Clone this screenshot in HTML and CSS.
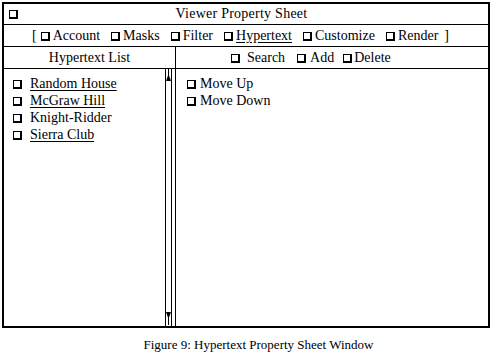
FILE: index.html
```html
<!DOCTYPE html>
<html>
<head>
<meta charset="utf-8">
<link rel="stylesheet" href="styles.css">
</head>
<body>
<div class="window">
  <div class="title-row">
    <span class="cb"></span>
    <span class="title">Viewer Property Sheet</span>
  </div>
  <div class="tool-row">[<span class="cb first"></span>Account<span class="cb"></span>Masks<span class="cb"></span>Filter<span class="cb"></span><u>Hypertext</u><span class="cb"></span>Customize<span class="cb"></span>Render<span class="close">]</span></div>
  <div class="head-row">
    <div class="head-left">Hypertext List</div>
    <div class="head-right"><span class="cb search"></span>Search<span class="cb add"></span>Add<span class="cb del"></span>Delete</div>
  </div>
  <div class="body-row">
    <div class="left-pane">
      <ul class="list">
        <li><span class="cb wide"></span><u>Random House</u></li>
        <li><span class="cb wide"></span><u>McGraw Hill</u></li>
        <li><span class="cb wide"></span>Knight-Ridder</li>
        <li><span class="cb wide"></span><u>Sierra Club</u></li>
      </ul>
      <div class="scrollbar">
        <svg class="arrow" width="5" height="13" viewBox="0 0 5 13"><rect x="2" y="0" width="1" height="6" fill="#000"/><polygon points="2.5,5 5,12 0,12" fill="#000"/></svg>
        <svg class="arrow" width="5" height="13" viewBox="0 0 5 13"><polygon points="0,0 5,0 2.5,7" fill="#000"/><rect x="2" y="6" width="1" height="7" fill="#000"/></svg>
      </div>
    </div>
    <div class="right-pane">
      <ul class="list actions">
        <li><span class="cb"></span>Move Up</li>
        <li><span class="cb"></span>Move Down</li>
      </ul>
    </div>
  </div>
</div>
<p class="caption">Figure 9: Hypertext Property Sheet Window</p>
</body>
</html>
```
FILE: styles.css
```css
html, body {
  margin: 0;
  padding: 0;
  background: #fff;
}
body {
  font-family: "Liberation Serif", "Times New Roman", serif;
  font-size: 14px;
  color: #000;
  width: 494px;
  height: 354px;
  overflow: hidden;
}
.window {
  margin: 2px 0 0 2px;
  width: 484px;
  height: 322px;
  border: 2px solid #000;
  display: flex;
  flex-direction: column;
}
.cb {
  display: inline-block;
  box-sizing: border-box;
  width: 9px;
  height: 9px;
  border: 1px solid #000;
  border-right-width: 2px;
  border-bottom-width: 2px;
  background: #fff;
  margin-right: 4px;
  vertical-align: -1px;
}
.cb.wide {
  margin-right: 8px;
}
.title-row {
  height: 20px;
  border-bottom: 1px solid #000;
  display: flex;
  align-items: center;
  padding-left: 5px;
  line-height: 20px;
}
.title-row .cb {
  margin-top: 1px;
}
.title {
  flex: 1;
  text-align: center;
  padding-right: 27px;
  letter-spacing: 0.25px;
}
.tool-row {
  height: 21px;
  line-height: 21px;
  border-bottom: 1px solid #000;
  padding-left: 28px;
  white-space: nowrap;
}
.tool-row .cb {
  margin: 0 3px 0 11px;
}
.tool-row .cb.first {
  margin-left: 4px;
}
.tool-row .close {
  margin-left: 6px;
}
.head-row {
  height: 21px;
  line-height: 21px;
  border-bottom: 1px solid #000;
  display: flex;
}
.head-left {
  width: 171px;
  border-right: 1px solid #000;
  text-align: center;
}
.head-right {
  flex: 1;
  padding-left: 55px;
  white-space: nowrap;
}
.head-right .cb.search {
  margin-right: 7px;
}
.head-right .cb.add {
  margin: 0 4px 0 12px;
}
.head-right .cb.del {
  margin: 0 2px 0 9px;
}
.body-row {
  flex: 1;
  display: flex;
  min-height: 0;
}
.left-pane {
  width: 171px;
  border-right: 1px solid #000;
  display: flex;
}
.list {
  list-style: none;
  margin: 0;
  padding: 6px 0 0 9px;
  line-height: 17px;
  flex: 1;
}
.list u, .tool-row u {
  text-underline-offset: 2px;
}
.scrollbar {
  width: 5px;
  border-left: 1px solid #000;
  border-right: 1px solid #000;
  margin-right: 3px;
  display: flex;
  flex-direction: column;
  justify-content: space-between;
  padding-bottom: 1px;
}
.arrow {
  display: block;
}
.right-pane {
  flex: 1;
  display: flex;
}
.actions {
  padding-left: 11px;
}
.caption {
  margin: 0;
  text-align: center;
  font-size: 13px;
  line-height: 20px;
  padding-top: 7px;
  padding-left: 23px;
}
```
